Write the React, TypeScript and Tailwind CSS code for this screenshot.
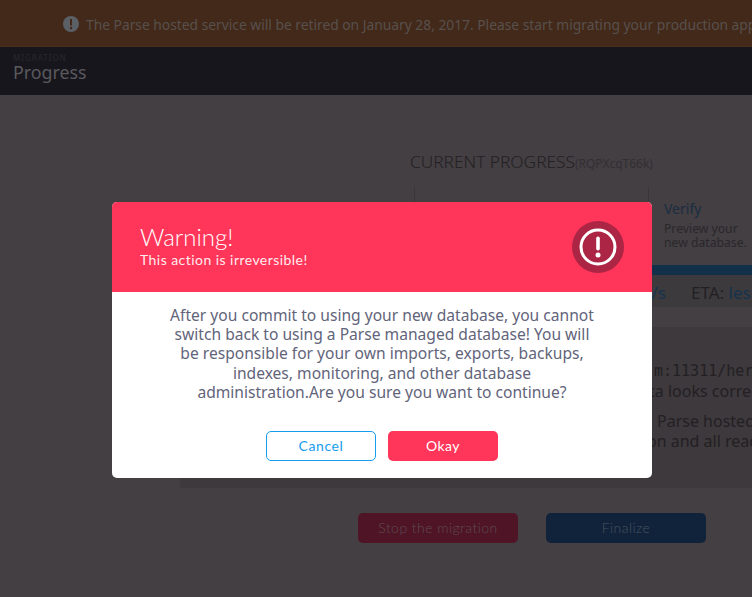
import React from 'react';

const noto = { fontFamily: '"Noto Sans", sans-serif' };
const lato = { fontFamily: 'Lato, sans-serif' };

const Step = ({ title, lines }: { title: string; lines: string[] }) => (
  <div className="w-[234px] shrink-0 border-l border-[#3a3639] pl-[15px] pt-[13px]">
    <div className="text-[14px] leading-[18px] text-[#1a2d42]">{title}</div>
    <div className="mt-[4px] text-[12.2px] leading-[13.5px] text-[#2a272b]">
      {lines.map((l) => (
        <div key={l}>{l}</div>
      ))}
    </div>
  </div>
);

const Modal = () => (
  <div className="absolute left-[112px] top-[202px] w-[540px] overflow-hidden rounded-[5px] bg-white">
    <div className="flex h-[90px] items-center justify-between bg-[#ff3659] px-7">
      <div className="mt-[-1px] text-white" style={lato}>
        <div className="text-[24px] font-light leading-[26px]">Warning!</div>
        <div className="text-[14px] leading-[20px] tracking-[0.45px] opacity-90">This action is irreversible!</div>
      </div>
      <div className="flex h-[52px] w-[52px] items-center justify-center rounded-full bg-[#ad2545]">
        <svg width="38" height="38" viewBox="0 0 38 38" fill="none">
          <circle cx="19" cy="19" r="17" stroke="#fff" strokeWidth="3" />
          <rect x="17.2" y="8.5" width="3.6" height="14" rx="1.8" fill="#fff" />
          <circle cx="19" cy="27" r="2.5" fill="#fff" />
        </svg>
      </div>
    </div>
    <div className="px-[56px] pt-[14px] text-center text-[15.6px] leading-[19.2px] text-[#62647a]" style={noto}>
      After you commit to using your new database, you cannot switch back to using a Parse managed database! You will be
      responsible for your own imports, exports, backups, indexes, monitoring, and other database administration.Are you
      sure you want to continue?
    </div>
    <div className="flex justify-center gap-3 pb-[17px] pt-[29px]" style={lato}>
      <button className="h-[30px] w-[110px] rounded-[5px] border border-[#169cee] pb-[2px] text-[14px] tracking-[0.6px] text-[#169cee]">
        Cancel
      </button>
      <button className="h-[30px] w-[110px] rounded-[5px] bg-[#ff3659] pb-[2px] text-[14px] tracking-[0.5px] text-white">
        Okay
      </button>
    </div>
  </div>
);

export default function App() {
  return (
    <div className="relative h-[597px] w-[752px] overflow-hidden bg-[#433f42]" style={noto}>
      <div className="flex h-[47px] items-center whitespace-nowrap border-b border-[#4a2c18] bg-[#432919] pl-[63px] pt-[4px] text-[13.8px] text-[#57504d]">
        <svg width="16" height="16" viewBox="0 0 16 16" className="mr-[7px] mt-[-2px] shrink-0">
          <circle cx="8" cy="8" r="8" fill="#5b5f66" />
          <rect x="7" y="3" width="2" height="6.5" fill="#432919" />
          <circle cx="8" cy="12" r="1.2" fill="#432919" />
        </svg>
        The Parse hosted service will be retired on January 28, 2017. Please start migrating your production apps
      </div>

      <div className="h-[48px] bg-[#17161c] pl-[13px] pt-[7px]">
        <div className="text-[8px] leading-[8px] tracking-[1px] text-[#2a292f]">MIGRATION</div>
        <div className="text-[17.8px] leading-[20px] text-[#5a595d]">Progress</div>
      </div>

      <div className="ml-[180px] w-[700px] pt-[56px]">
        <div className="flex items-baseline pl-[230px]">
          <span className="text-[17.3px] font-light leading-[22px] text-[#232024]">CURRENT PROGRESS</span>
          <span className="text-[12px] text-[#322f33]">(RQPXcqT66k)</span>
        </div>
        <div className="mt-[14px] flex h-[78px] pl-[234px]">
          <Step title="" lines={[]} />
          <Step title="Verify" lines={['Preview your', 'new database.']} />
        </div>
        <div className="h-[10px] bg-[#12304a]" />
        <div className="flex h-[32px] items-start whitespace-nowrap border-t border-[#3d393c] bg-[#3d3a3d] pt-[6px] text-[17px] leading-[22px] text-[#232024]">
          <span className="w-[486px] text-right text-[#14334e]">2.3 MB/s</span>
          <span className="ml-[25px]">
            ETA: <span className="text-[#14334e]">less than a minute</span>
          </span>
        </div>
        <div className="mt-[20px] h-[161px] bg-[#3d393c] pt-[34px] text-[16px] leading-[20px] text-[#232024]">
          <div className="whitespace-nowrap pl-[474px] text-[15px]" style={{ fontFamily: '"DejaVu Sans Mono", monospace' }}>
            m:11311/heroku
          </div>
          <div className="whitespace-nowrap pl-[469px]">ta looks correct</div>
          <div className="mt-[10px] whitespace-nowrap pl-[477px]">Parse hosted</div>
          <div className="whitespace-nowrap pl-[467px]">on and all ready</div>
        </div>
        <div className="mt-[25px] flex gap-7 pl-[178px] font-light" style={lato}>
          <button className="h-[30px] w-[160px] rounded-[5px] bg-[#4f1526] pb-[2px] text-[14px] tracking-[0.45px] text-[#5e4a52]">
            Stop the migration
          </button>
          <button className="h-[30px] w-[160px] rounded-[5px] bg-[#11233a] pb-[2px] text-[14px] tracking-[0.45px] text-[#45525f]">
            Finalize
          </button>
        </div>
      </div>

      <Modal />
    </div>
  );
}
